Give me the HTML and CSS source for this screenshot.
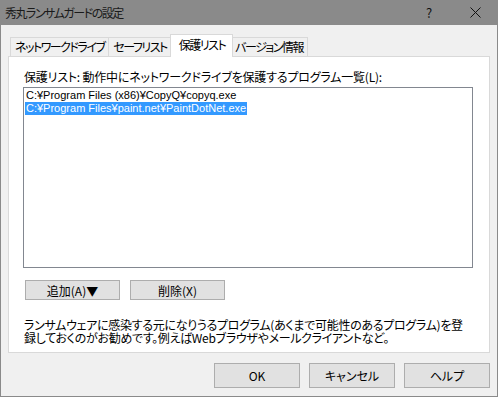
FILE: index.html
```html
<!DOCTYPE html>
<html lang="ja">
<head>
    <meta charset="UTF-8">
    <title>秀丸ランサムガードの設定</title>
    <link rel="stylesheet" href="styles.css">
</head>
<body>
    <div class="window">
        <div class="titlebar">
            <span class="title">秀丸ランサムガードの設定</span>
            <span class="title-btn">?</span>
            <span class="title-btn">
                <svg width="11" height="11" viewBox="0 0 11 11">
                    <path d="M0.5 0.5 L10.5 10.5 M10.5 0.5 L0.5 10.5" stroke="#111" stroke-width="1" fill="none"/>
                </svg>
            </span>
        </div>

        <div class="content">
            <div class="tabs">
                <div class="tab">ネットワークドライブ</div>
                <div class="tab">セーフリスト</div>
                <div class="tab active">保護リスト</div>
                <div class="tab">バージョン情報</div>
            </div>

            <div class="panel">
                <div class="list-label">保護リスト: 動作中にネットワークドライブを保護するプログラム一覧(L):</div>
                <div class="listbox">
                    <div class="list-item"><span>C:¥Program Files (x86)¥CopyQ¥copyq.exe</span></div>
                    <div class="list-item selected"><span>C:¥Program Files¥paint.net¥PaintDotNet.exe</span></div>
                </div>
                <div class="list-buttons">
                    <button class="btn btn-small">追加(A)▼</button>
                    <button class="btn btn-small">削除(X)</button>
                </div>
                <p class="note">ランサムウェアに感染する元になりうるプログラム(あくまで可能性のあるプログラム)を登<br>録しておくのがお勧めです。例えばWebブラウザやメールクライアントなど。</p>
            </div>

            <div class="footer">
                <button class="btn btn-dialog">OK</button>
                <button class="btn btn-dialog">キャンセル</button>
                <button class="btn btn-dialog">ヘルプ</button>
            </div>
        </div>
    </div>
</body>
</html>
```

FILE: styles.css
```css
* {
    margin: 0;
    padding: 0;
    box-sizing: border-box;
}

body {
    margin: 0;
    background: #f0f0f0;
    font-family: "Noto Sans CJK JP", sans-serif;
    font-size: 12px;
    font-feature-settings: "palt";
    color: #000;
}

.window {
    width: 498px;
    height: 397px;
    border: 1px solid #8a8a8a;
    border-top: none;
    background: #f0f0f0;
    display: flex;
    flex-direction: column;
}

.titlebar {
    height: 25px;
    background: #8a8a8a;
    display: flex;
    align-items: center;
    padding-left: 5px;
    margin: 0 -1px;
}

.title {
    flex: 1;
    color: #1a1a1a;
    letter-spacing: -1.5px;
}

.title-btn {
    width: 46px;
    height: 25px;
    display: flex;
    align-items: center;
    justify-content: center;
    font-size: 13px;
    color: #111;
}

.content {
    flex: 1;
    padding: 9px 7px 0 7px;
    display: flex;
    flex-direction: column;
}

.tabs {
    display: flex;
    align-items: flex-end;
    height: 23px;
    padding-left: 2px;
    margin-bottom: -1px;
    position: relative;
    z-index: 1;
}

.tab {
    height: 19px;
    margin-bottom: 1px;
    padding: 0 4px;
    line-height: 18px;
    letter-spacing: -1.5px;
    background: #f0f0f0;
    border: 1px solid #d9d9d9;
    border-bottom: none;
    white-space: nowrap;
}

.tab + .tab {
    margin-left: -1px;
}

.tab.active {
    height: 23px;
    margin: 0 -2px;
    padding: 0 7px 0 8px;
    line-height: 20px;
    background: #fff;
    position: relative;
    z-index: 2;
}

.panel {
    height: 297px;
    background: #fff;
    border: 1px solid #d9d9d9;
    padding: 13px 15px 0 14px;
}

.list-label {
    line-height: 14px;
    padding-left: 1px;
    margin-bottom: 3px;
    letter-spacing: -0.2px;
    white-space: nowrap;
}

.listbox {
    width: 450px;
    height: 181px;
    border: 1px solid #828790;
    padding: 1px 0 0 1px;
}

.list-item {
    font-family: "Liberation Sans", "Noto Sans CJK JP", sans-serif;
    font-size: 11px;
    line-height: 13px;
    height: 13px;
    white-space: nowrap;
}

.list-item span {
    display: inline-block;
    padding: 0 1px;
}

.list-item.selected span {
    background: #3399ff;
    color: #fff;
}

.list-buttons {
    display: flex;
    gap: 10px;
    margin-top: 12px;
    padding-left: 2px;
}

.btn {
    background: #e1e1e1;
    border: 1px solid #adadad;
    font-family: inherit;
    font-size: 12px;
    font-feature-settings: "palt";
    color: #000;
}

.btn-small {
    width: 95px;
    height: 20px;
}

.note {
    margin-top: 18px;
    padding-left: 1px;
    line-height: 13px;
    letter-spacing: -0.3px;
    white-space: nowrap;
}

.footer {
    display: flex;
    justify-content: flex-end;
    gap: 9px;
    padding-top: 10px;
}

.btn-dialog {
    width: 86px;
    height: 25px;
}
```
